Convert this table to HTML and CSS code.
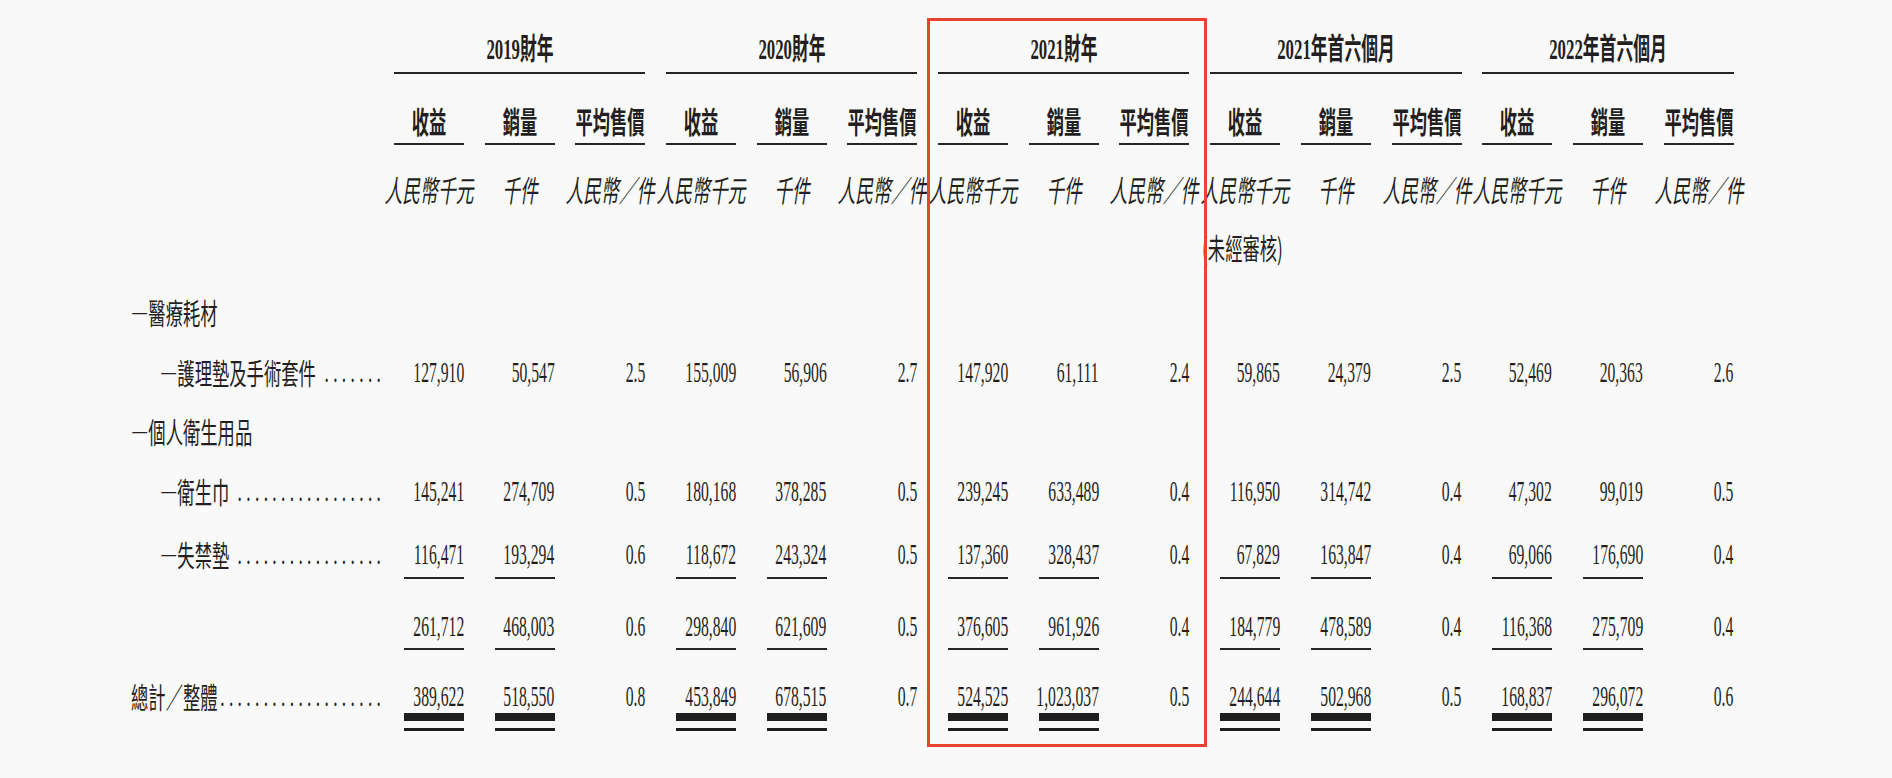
FILE: index.html
```html
<!DOCTYPE html>
<html lang="zh-Hant">
<head>
<meta charset="utf-8">
<title>銷量及平均售價</title>
<link rel="stylesheet" href="styles.css">
</head>
<body>
<div class="page">
  <div class="sheet">
    <!-- row 1: period headings -->
    <div class="lab"></div>
    <div class="grp"><span>2019財年</span></div>
    <div class="grp"><span>2020財年</span></div>
    <div class="grp"><span>2021財年</span></div>
    <div class="grp"><span>2021年首六個月</span></div>
    <div class="grp"><span>2022年首六個月</span></div>

    <!-- row 2: column headings -->
    <div class="lab"></div>
    <div class="col"><span>收益</span></div><div class="col"><span>銷量</span></div><div class="col"><span>平均售價</span></div>
    <div class="col"><span>收益</span></div><div class="col"><span>銷量</span></div><div class="col"><span>平均售價</span></div>
    <div class="col"><span>收益</span></div><div class="col"><span>銷量</span></div><div class="col"><span>平均售價</span></div>
    <div class="col"><span>收益</span></div><div class="col"><span>銷量</span></div><div class="col"><span>平均售價</span></div>
    <div class="col"><span>收益</span></div><div class="col"><span>銷量</span></div><div class="col"><span>平均售價</span></div>

    <!-- row 3: units -->
    <div class="lab"></div>
    <div class="c unit"><span>人民幣千元</span></div><div class="c unit"><span>千件</span></div><div class="c unit"><span>人民幣／件</span></div>
    <div class="c unit"><span>人民幣千元</span></div><div class="c unit"><span>千件</span></div><div class="c unit"><span>人民幣／件</span></div>
    <div class="c unit"><span>人民幣千元</span></div><div class="c unit"><span>千件</span></div><div class="c unit"><span>人民幣／件</span></div>
    <div class="c unit"><span>人民幣千元</span></div><div class="c unit"><span>千件</span></div><div class="c unit"><span>人民幣／件</span></div>
    <div class="c unit"><span>人民幣千元</span></div><div class="c unit"><span>千件</span></div><div class="c unit"><span>人民幣／件</span></div>

    <!-- row 4: unaudited note -->
    <div class="lab"></div>
    <div class="c note"><span>(未經審核)</span></div>

    <!-- row 5 -->
    <div class="c lab"><div class="lab-in"><span>—醫療耗材</span></div></div>

    <!-- row 6 -->
    <div class="c lab l2"><div class="lab-in"><span>—護理墊及手術套件</span><span class="dots">.......</span></div></div>
    <div class="c num"><span>127,910</span></div><div class="c num"><span>50,547</span></div><div class="c num"><span>2.5</span></div>
    <div class="c num"><span>155,009</span></div><div class="c num"><span>56,906</span></div><div class="c num"><span>2.7</span></div>
    <div class="c num"><span>147,920</span></div><div class="c num"><span>61,111</span></div><div class="c num"><span>2.4</span></div>
    <div class="c num"><span>59,865</span></div><div class="c num"><span>24,379</span></div><div class="c num"><span>2.5</span></div>
    <div class="c num"><span>52,469</span></div><div class="c num"><span>20,363</span></div><div class="c num"><span>2.6</span></div>

    <!-- row 7 -->
    <div class="c lab"><div class="lab-in"><span>—個人衛生用品</span></div></div>

    <!-- row 8 -->
    <div class="c lab l2"><div class="lab-in"><span>—衛生巾</span><span class="dots">.................</span></div></div>
    <div class="c num"><span>145,241</span></div><div class="c num"><span>274,709</span></div><div class="c num"><span>0.5</span></div>
    <div class="c num"><span>180,168</span></div><div class="c num"><span>378,285</span></div><div class="c num"><span>0.5</span></div>
    <div class="c num"><span>239,245</span></div><div class="c num"><span>633,489</span></div><div class="c num"><span>0.4</span></div>
    <div class="c num"><span>116,950</span></div><div class="c num"><span>314,742</span></div><div class="c num"><span>0.4</span></div>
    <div class="c num"><span>47,302</span></div><div class="c num"><span>99,019</span></div><div class="c num"><span>0.5</span></div>

    <!-- row 9 -->
    <div class="c lab l2"><div class="lab-in"><span>—失禁墊</span><span class="dots">.................</span></div></div>
    <div class="c num u1"><span>116,471</span></div><div class="c num u1"><span>193,294</span></div><div class="c num"><span>0.6</span></div>
    <div class="c num u1"><span>118,672</span></div><div class="c num u1"><span>243,324</span></div><div class="c num"><span>0.5</span></div>
    <div class="c num u1"><span>137,360</span></div><div class="c num u1"><span>328,437</span></div><div class="c num"><span>0.4</span></div>
    <div class="c num u1"><span>67,829</span></div><div class="c num u1"><span>163,847</span></div><div class="c num"><span>0.4</span></div>
    <div class="c num u1"><span>69,066</span></div><div class="c num u1"><span>176,690</span></div><div class="c num"><span>0.4</span></div>

    <!-- row 10: subtotal -->
    <div class="lab"></div>
    <div class="c num u2"><span>261,712</span></div><div class="c num u2"><span>468,003</span></div><div class="c num"><span>0.6</span></div>
    <div class="c num u2"><span>298,840</span></div><div class="c num u2"><span>621,609</span></div><div class="c num"><span>0.5</span></div>
    <div class="c num u2"><span>376,605</span></div><div class="c num u2"><span>961,926</span></div><div class="c num"><span>0.4</span></div>
    <div class="c num u2"><span>184,779</span></div><div class="c num u2"><span>478,589</span></div><div class="c num"><span>0.4</span></div>
    <div class="c num u2"><span>116,368</span></div><div class="c num u2"><span>275,709</span></div><div class="c num"><span>0.4</span></div>

    <!-- row 11: total -->
    <div class="c lab"><div class="lab-in"><span>總計／整體</span><span class="dots">...................</span></div></div>
    <div class="c num dbl"><span>389,622</span></div><div class="c num dbl"><span>518,550</span></div><div class="c num"><span>0.8</span></div>
    <div class="c num dbl"><span>453,849</span></div><div class="c num dbl"><span>678,515</span></div><div class="c num"><span>0.7</span></div>
    <div class="c num dbl"><span>524,525</span></div><div class="c num dbl"><span>1,023,037</span></div><div class="c num"><span>0.5</span></div>
    <div class="c num dbl"><span>244,644</span></div><div class="c num dbl"><span>502,968</span></div><div class="c num"><span>0.5</span></div>
    <div class="c num dbl"><span>168,837</span></div><div class="c num dbl"><span>296,072</span></div><div class="c num"><span>0.6</span></div>

    <!-- highlight frame drawn over the FY2021 columns -->
    <div class="hl"></div>
  </div>
</div>
</body>
</html>
```

FILE: styles.css
```css
* { box-sizing: border-box; }
html, body { margin: 0; }
body {
  background: #f9f9f9;
  color: #231f20;
  font-family: "Liberation Serif", "Noto Sans CJK TC", serif;
  overflow: hidden;
}
.page { padding: 17px 0 0 131px; }

.sheet {
  position: relative;
  display: grid;
  grid-template-columns: 242.3px repeat(15, 70px);
  column-gap: 20.7px;
  grid-template-rows: 57px 84.5px 58.5px 64.5px 60.5px 59px 60px 63px 71.5px 70px 81.5px;
}

/* generic body cell */
.c {
  display: flex;
  align-self: start;
  padding-top: 13px;
  line-height: 34px;
  white-space: nowrap;
}
.c > span, .grp > span, .col > span { flex: none; white-space: nowrap; }

/* period headings */
.grp {
  grid-column: span 3;
  height: 57px;
  display: flex;
  align-items: flex-end;
  justify-content: center;
  padding-bottom: 6px;
  border-bottom: 2px solid #262626;
  font-weight: 700;
  font-size: 30px;
  line-height: 34px;
}
.grp > span { transform: scaleX(0.56); }

/* column headings */
.col {
  height: 71px;
  display: flex;
  align-items: flex-end;
  justify-content: center;
  padding-bottom: 6px;
  border-bottom: 2px solid #262626;
  font-family: "Noto Sans CJK TC", sans-serif;
  font-weight: 700;
  font-size: 30px;
  line-height: 34px;
}
.col > span { transform: scaleX(0.575); }

/* unit row */
.unit {
  justify-content: center;
  font-family: "Noto Sans CJK TC", sans-serif;
  font-style: italic;
  font-size: 30px;
}
.unit > span { transform: scaleX(0.593); }

.note {
  grid-column: 11;
  justify-content: flex-start;
  margin-left: -8px;
  font-family: "Noto Sans CJK TC", sans-serif;
  font-size: 29px;
}
.note > span { transform: scaleX(0.597); transform-origin: left center; }

/* row labels */
.lab {
  grid-column: 1;
  margin-right: -12px;
  font-family: "Noto Sans CJK TC", sans-serif;
  font-size: 29px;
}
.lab.l2 { padding-left: 29px; }
.lab-in {
  flex: none;
  width: 167.5%;
  display: flex;
  justify-content: space-between;
  transform: scaleX(0.597);
  transform-origin: left center;
}
.dots {
  font-family: "Liberation Serif", serif;
  letter-spacing: 7.3px;
}

/* numbers */
.num {
  justify-content: flex-end;
  font-size: 29px;
}
.num > span { transform: scaleX(0.54); transform-origin: right center; }

.u1 { margin-left: 10px; padding-bottom: 6px; border-bottom: 2px solid #262626; }
.u2 { margin-left: 10px; padding-bottom: 5.5px; border-bottom: 2px solid #262626; }
.dbl {
  margin-left: 10px;
  padding-bottom: 15.5px;
  border-bottom: 3px solid #1f1f1f;
  background: linear-gradient(#1f1f1f, #1f1f1f) left bottom 7px / 100% 8px no-repeat;
}

/* highlight frame, an overlay on top of the FY2021 columns */
.hl {
  position: absolute;
  left: 796px;
  top: 1px;
  width: 280px;
  height: 729px;
  border: 3px solid #e8432e;
  z-index: 2;
  pointer-events: none;
}
```
